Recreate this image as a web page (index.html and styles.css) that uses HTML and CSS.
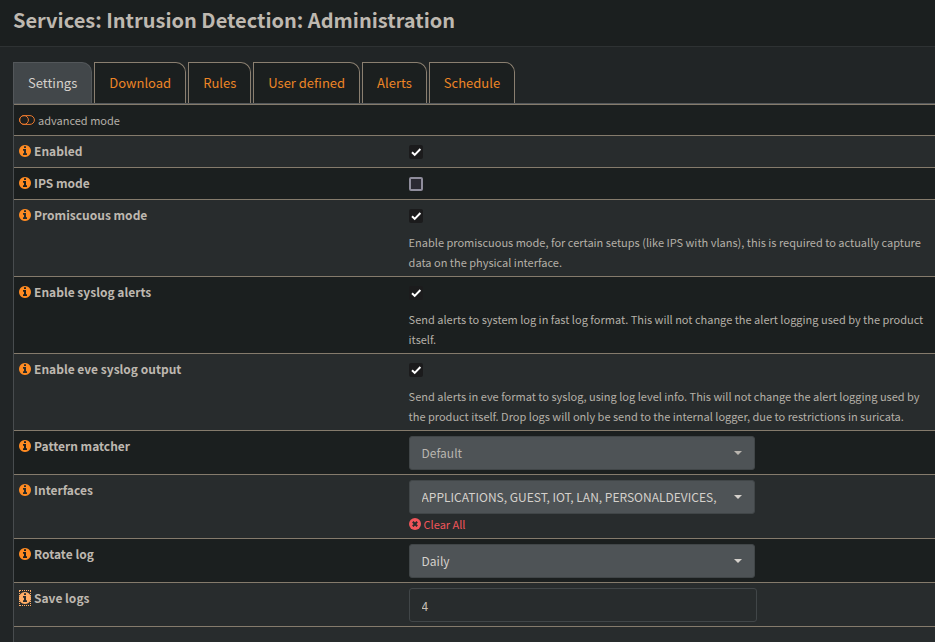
FILE: index.html
```html
<!DOCTYPE html>
<html lang="en">
<head>
<meta charset="utf-8">
<meta name="viewport" content="width=device-width, initial-scale=1">
<title>Services: Intrusion Detection: Administration</title>
<link rel="stylesheet" href="styles.css">
</head>
<body>
<svg class="sprite" aria-hidden="true">
  <symbol id="info" viewBox="0 128 1536 1536"><path d="M1024 1376v-160q0-14-9-23t-23-9h-96v-512q0-14-9-23t-23-9h-320q-14 0-23 9t-9 23v160q0 14 9 23t23 9h96v320h-96q-14 0-23 9t-9 23v160q0 14 9 23t23 9h448q14 0 23-9t9-23zm-128-896v-160q0-14-9-23t-23-9h-192q-14 0-23 9t-9 23v160q0 14 9 23t23 9h192q14 0 23-9t9-23zm640 416q0 209-103 385.5t-279.5 279.5-385.5 103-385.5-103-279.5-279.5-103-385.5 103-385.5 279.5-279.5 385.5-103 385.5 103 279.5 279.5 103 385.5z"/></symbol>
</svg>
<header class="page-head"><h1>Services: Intrusion Detection: Administration</h1></header>
<main class="content">
  <nav class="tabs">
    <a class="tab active" href="#settings">Settings</a>
    <a class="tab" href="#download">Download</a>
    <a class="tab" href="#rules">Rules</a>
    <a class="tab" href="#user">User defined</a>
    <a class="tab" href="#alerts">Alerts</a>
    <a class="tab" href="#schedule">Schedule</a>
  </nav>
  <form class="panel">
    <table>
      <colgroup><col class="col-label"><col></colgroup>
      <tbody>
        <tr>
          <td colspan="2"><a class="advanced" href="#advanced"><svg class="toggle" viewBox="0 0 16 10"><rect x=".6" y=".6" width="14.8" height="8.8" rx="4.4"/><circle cx="5" cy="5" r="4.4"/></svg><small>advanced mode</small></a></td>
        </tr>
        <tr>
          <th scope="row"><div class="name"><a class="help" href="#h1"><svg><use href="#info"/></svg></a><label for="enabled">Enabled</label></div></th>
          <td class="field"><input type="checkbox" id="enabled" checked></td>
        </tr>
        <tr>
          <th scope="row"><div class="name"><a class="help" href="#h2"><svg><use href="#info"/></svg></a><label for="ips">IPS mode</label></div></th>
          <td class="field"><input type="checkbox" id="ips"></td>
        </tr>
        <tr>
          <th scope="row"><div class="name"><a class="help" href="#h3"><svg><use href="#info"/></svg></a><label for="promisc">Promiscuous mode</label></div></th>
          <td class="field"><input type="checkbox" id="promisc" checked><p>Enable promiscuous mode, for certain setups (like IPS with vlans), this is required to actually capture data on the physical interface.</p></td>
        </tr>
        <tr>
          <th scope="row"><div class="name"><a class="help" href="#h4"><svg><use href="#info"/></svg></a><label for="syslog">Enable syslog alerts</label></div></th>
          <td class="field"><input type="checkbox" id="syslog" checked><p>Send alerts to system log in fast log format. This will not change the alert logging used by the product itself.</p></td>
        </tr>
        <tr>
          <th scope="row"><div class="name"><a class="help" href="#h5"><svg><use href="#info"/></svg></a><label for="eve">Enable eve syslog output</label></div></th>
          <td class="field"><input type="checkbox" id="eve" checked><p>Send alerts in eve format to syslog, using log level info. This will not change the alert logging used by the product itself. Drop logs will only be send to the internal logger, due to restrictions in suricata.</p></td>
        </tr>
        <tr>
          <th scope="row"><div class="name"><a class="help" href="#h6"><svg><use href="#info"/></svg></a><label for="matcher">Pattern matcher</label></div></th>
          <td class="field"><div class="select muted"><select id="matcher"><option>Default</option></select></div></td>
        </tr>
        <tr>
          <th scope="row"><div class="name"><a class="help" href="#h7"><svg><use href="#info"/></svg></a><label for="ifaces">Interfaces</label></div></th>
          <td class="field"><div class="select"><select id="ifaces"><option>APPLICATIONS, GUEST, IOT, LAN, PERSONALDEVICES,</option></select></div>
            <a class="clear" href="#clear"><svg viewBox="0 0 12 12"><circle cx="6" cy="6" r="6"/><path d="M3.8 3.8l4.4 4.4M8.2 3.8L3.8 8.2"/></svg><small>Clear All</small></a></td>
        </tr>
        <tr>
          <th scope="row"><div class="name"><a class="help" href="#h8"><svg><use href="#info"/></svg></a><label for="rotate">Rotate log</label></div></th>
          <td class="field"><div class="select"><select id="rotate"><option>Daily</option></select></div></td>
        </tr>
        <tr>
          <th scope="row"><div class="name"><a class="help focused" href="#h9"><svg><use href="#info"/></svg></a><label for="save">Save logs</label></div></th>
          <td class="field"><input type="text" id="save" value="4"></td>
        </tr>
        <tr><td colspan="2"></td></tr>
      </tbody>
    </table>
  </form>
</main>
</body>
</html>
```
FILE: styles.css
```css
* { box-sizing: border-box; }
html { overflow: hidden; }
body {
  margin: 0;
  background: #212526;
  color: #c5bfb7;
  font: 13px/20px "Noto Sans CJK SC", "Noto Sans", sans-serif;
}
a { text-decoration: none; }
.sprite { display: none; }
.page-head {
  padding: 5px 13px 11px;
  background: #1b1f1f;
  border-bottom: 1px solid #2e3233;
}
h1 { margin: 0; font-size: 20px; line-height: 30px; font-weight: 700; color: #beb8b0; }
.content { padding: 15px 0 0 13px; }
.tabs { display: flex; gap: 2px; border-bottom: 1px solid #53575a; }
.tab {
  padding: 10px 14px;
  border: 1px solid #8a7f70;
  border-bottom: 0;
  border-radius: 0 10px 0 0;
  background: #1b1f1f;
  color: #ec8526;
}
.tab.active { background: #42474a; border-color: #53575a; color: #d5d1cc; }
.panel { border-left: 1px solid #484c4e; }
table { width: 100%; table-layout: fixed; border-collapse: separate; border-spacing: 0; }
.col-label { width: 42.3%; }
tr { background: #1b1f1f; }
tr:nth-child(even) { background: #282c2d; }
tr:last-child { background: #282c2d; }
th, td { padding: 5px; border-top: 1px solid #857b6c; vertical-align: top; text-align: left; }
th { font-size: 12px; font-weight: 700; color: #beb8b0; }
.field { padding-bottom: 4px; }
tr:last-child td { height: 32px; }
small { font-size: 11px; }
.name { display: flex; align-items: center; gap: 3px; line-height: 20px; }
.help { display: block; width: 12px; height: 16px; padding: 2px 0; color: #ff8b22; }
.help svg { display: block; width: 12px; height: 12px; fill: currentColor; }
.help.focused { color: #ffad66; outline: 1px dotted #ffad66; outline-offset: -1px; }
.advanced { display: flex; align-items: center; gap: 3px; color: #b5b0a8; }
.toggle { width: 16px; height: 10px; fill: none; stroke: #e8782e; }
input[type="checkbox"] {
  appearance: none;
  display: block;
  width: 14px;
  height: 14px;
  margin: 4px 0;
  border: 2px solid #8f8d9c;
  border-radius: 2px;
  background: #2b2a33;
}
input[type="checkbox"]:checked {
  border: 0;
  background: #1b1b1c url("data:image/svg+xml,%3Csvg xmlns='http://www.w3.org/2000/svg' viewBox='0 0 14 14'%3E%3Cpath d='M3 7.2l2.7 2.7L11.4 4' fill='none' stroke='%23fff' stroke-width='2'/%3E%3C/svg%3E");
}
p { margin: 9px 0 0; font-size: 11px; line-height: 20px; color: #b5b0a8; }
.select { position: relative; width: 346px; max-width: 100%; color: #d5d1cc; }
.select.muted { color: #b9b5af; }
.select::after {
  content: "";
  position: absolute;
  right: 13px;
  top: 15px;
  border: 4px solid transparent;
  border-top-color: currentColor;
  border-bottom: 0;
  pointer-events: none;
}
select, input[type="text"] {
  appearance: none;
  display: block;
  width: 100%;
  height: 34px;
  padding: 0 12px;
  border: 1px solid #414648;
  border-radius: 3px;
  background: #4e5356;
  color: inherit;
  font: inherit;
  font-size: 12px;
}
input[type="text"] { width: 348px; max-width: 100%; background: #282c2d; }
.clear { display: flex; align-items: center; gap: 3px; color: #f0555a; }
.clear svg { width: 12px; height: 12px; fill: #f0555a; }
.clear path { stroke: #282c2d; stroke-width: 2; }
```
